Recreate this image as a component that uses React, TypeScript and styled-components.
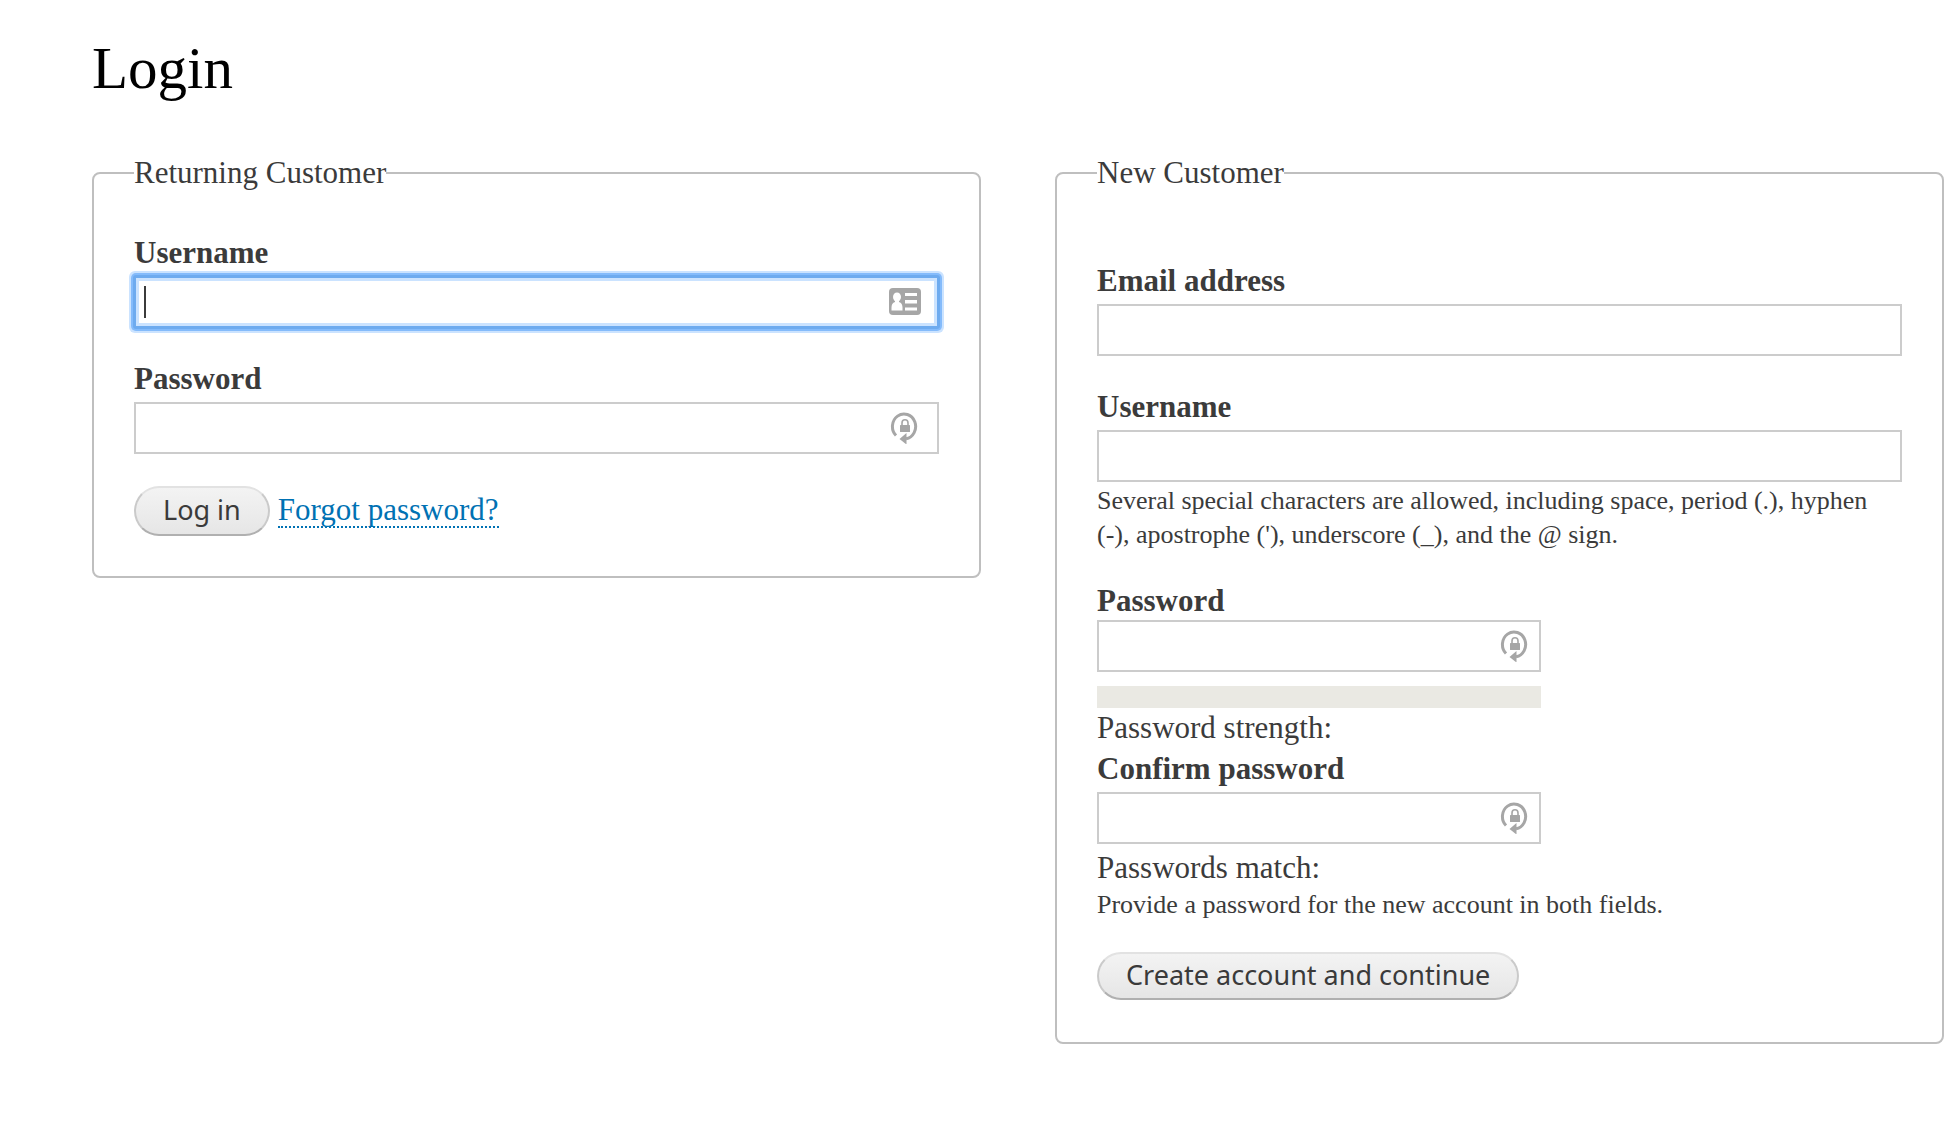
import React from 'react';
import styled, { createGlobalStyle, css } from 'styled-components';

const serif = "Georgia, 'Liberation Serif', serif";
const sans = "'Lucida Grande', 'Noto Sans', sans-serif";

const GlobalStyle = createGlobalStyle`
  *, *::before, *::after { box-sizing: border-box; }
  body {
    margin: 0;
    background: #fff;
    color: #3b3b3b;
    font-family: ${serif};
    font-size: 31px;
    line-height: 36px;
  }
`;

const Page = styled.main`
  padding: 36px 14px 80px 92px;
`;

const Title = styled.h1`
  margin: 0 0 56px;
  color: #000;
  font-size: 59px;
  font-weight: 400;
  line-height: 64px;
`;

const Columns = styled.div`
  display: grid;
  grid-template-columns: repeat(2, minmax(0, 1fr));
  align-items: start;
  gap: 74px;
`;

const Panel = styled.fieldset`
  min-width: 0;
  margin: 0;
  padding: 0 40px 40px;
  border: 2px solid #bfbfbf;
  border-radius: 8px;
`;

const Legend = styled.legend`
  padding: 0;
  line-height: 34px;
`;

const Form = styled.form<{ $top: number }>`
  display: flex;
  flex-direction: column;
  gap: 32px;
  padding-top: ${(p) => p.$top}px;
`;

const Group = styled.div`
  display: flex;
  flex-direction: column;
`;

const Label = styled.label<{ $tight?: boolean }>`
  margin-bottom: ${(p) => (p.$tight ? 0 : 4)}px;
  font-weight: 700;
  line-height: 38px;
`;

const Control = styled.div<{ $narrow?: boolean }>`
  position: relative;
  width: ${(p) => (p.$narrow ? '444px' : '100%')};
  max-width: 100%;
`;

const TextBox = styled.input<{ $active?: boolean }>`
  display: block;
  width: 100%;
  height: 52px;
  padding: 4px 8px;
  border: 2px solid #ccc;
  border-radius: 0;
  outline: none;
  background: #fff;
  color: inherit;
  font: inherit;
  ${(p) =>
    p.$active &&
    css`
      border-color: #6eabef;
      border-radius: 2px;
      box-shadow:
        0 0 0 1px #6eabef,
        0 0 0 3px #84bbfb,
        0 0 0 5px #cbe3ff,
        inset 0 0 0 3px #cbe3ff;
    `}
`;

const Caret = styled.span`
  position: absolute;
  top: 10px;
  left: 10px;
  width: 2px;
  height: 32px;
  background: #3b3b3b;
`;

const IconSlot = styled.span<{ $right: number }>`
  position: absolute;
  top: 10px;
  right: ${(p) => p.$right}px;
  display: flex;
  width: 32px;
  height: 32px;
`;

const Help = styled.p`
  margin: 2px 0 -2px;
  font-size: 26px;
  line-height: 34px;
`;

const Meter = styled.div`
  width: 444px;
  max-width: 100%;
  height: 22px;
  margin-top: 14px;
  background: #eae9e3;
`;

const Status = styled.div<{ $top: number; $bottom?: number }>`
  margin: ${(p) => p.$top}px 0 ${(p) => p.$bottom ?? 0}px;
`;

const Actions = styled.div`
  display: flex;
  align-items: flex-start;
  gap: 8px;
  min-height: 50px;
`;

const Button = styled.button<{ $compact?: boolean }>`
  height: ${(p) => (p.$compact ? 48 : 50)}px;
  padding: 0 27px 2px;
  border: 2px solid;
  border-color: #e2e2e2 #cacaca #b0b0b0;
  border-radius: 25px;
  background: linear-gradient(#f3f3f3, #e6e6e6);
  color: #3a3a3a;
  font-family: ${sans};
  font-size: 27px;
  line-height: 36px;
  white-space: nowrap;
`;

const Link = styled.a`
  margin-top: 8px;
  border-bottom: 2px dotted #0071b3;
  color: #0071b3;
  line-height: 32px;
  text-decoration: none;
`;

const IdCardIcon = () => (
  <svg width="32" height="32" viewBox="0 0 32 32" aria-hidden="true">
    <rect x="0" y="2" width="32" height="27" rx="4" fill="#a6a6a6" />
    <ellipse cx="8" cy="11" rx="4" ry="4.500" fill="#fff" />
    <path d="M6 14h4v2c2.500.6 3.500 3 3.500 5.500V24.500h-11v-3c0-2.500 1-4.900 3.500-5.500z" fill="#fff" />
    <path d="M16 7h12v3H16zM16 14h12v3.500H16zM16 21.500h12v3H16z" fill="#fff" />
  </svg>
);

const LockIcon = () => (
  <svg width="32" height="32" viewBox="0 0 32 32" aria-hidden="true">
    <path d="M7 23.500A11.600 12.500 0 1 1 17 26.800" fill="none" stroke="#a6a6a6" strokeWidth="3" />
    <path d="M10.500 27l7-6v11.500z" fill="#a6a6a6" />
    <path d="M13 14.500v-3.500a3 3.200 0 0 1 6 0V14.500" fill="none" stroke="#a6a6a6" strokeWidth="1.600" />
    <rect x="11" y="13" width="10" height="7" rx="0.500" fill="#a6a6a6" />
  </svg>
);

type FieldProps = {
  id: string;
  label: string;
  type?: string;
  active?: boolean;
  narrow?: boolean;
  tight?: boolean;
  icon?: React.ReactNode;
};

const Field = ({ id, label, type = 'text', active, narrow, tight, icon }: FieldProps) => (
  <>
    <Label htmlFor={id} $tight={tight}>{label}</Label>
    <Control $narrow={narrow}>
      <TextBox id={id} name={id} type={type} $active={active} />
      {active && <Caret />}
      {icon && <IconSlot $right={narrow ? 10 : 18}>{icon}</IconSlot>}
    </Control>
  </>
);

export default function App() {
  return (
    <>
      <GlobalStyle />
      <Page>
        <Title>Login</Title>
        <Columns>
          <Panel>
            <Legend>Returning Customer</Legend>
            <Form $top={44}>
              <Group>
                <Field id="login-name" label="Username" active icon={<IdCardIcon />} />
              </Group>
              <Group>
                <Field id="login-pass" label="Password" type="password" icon={<LockIcon />} />
              </Group>
              <Actions>
                <Button type="button">Log in</Button>
                <Link href="#forgot">Forgot password?</Link>
              </Actions>
            </Form>
          </Panel>
          <Panel>
            <Legend>New Customer</Legend>
            <Form $top={72}>
              <Group>
                <Field id="new-mail" label="Email address" type="email" />
              </Group>
              <Group>
                <Field id="new-name" label="Username" />
                <Help>
                  Several special characters are allowed, including space, period (.), hyphen (-),
                  apostrophe ('), underscore (_), and the @ sign.
                </Help>
              </Group>
              <Group>
                <Field id="new-pass" label="Password" type="password" narrow tight icon={<LockIcon />} />
                <Meter />
                <Status $top={2} $bottom={4}>Password strength:</Status>
                <Field id="new-confirm" label="Confirm password" type="password" narrow icon={<LockIcon />} />
                <Status $top={6}>Passwords match:</Status>
                <Help>Provide a password for the new account in both fields.</Help>
              </Group>
              <Actions>
                <Button type="button" $compact>Create account and continue</Button>
              </Actions>
            </Form>
          </Panel>
        </Columns>
      </Page>
    </>
  );
}
